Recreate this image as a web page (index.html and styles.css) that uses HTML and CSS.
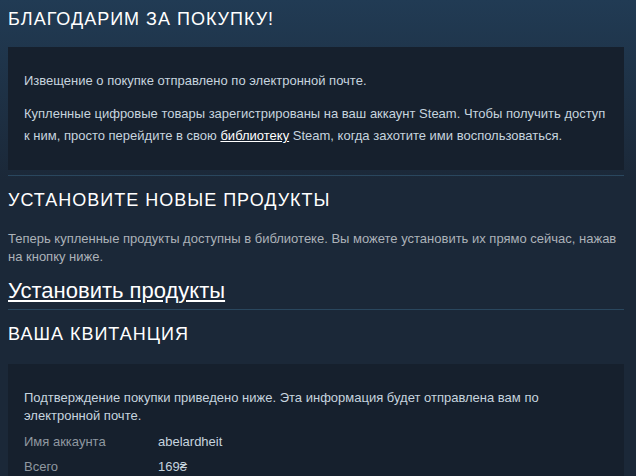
FILE: index.html
```html
<!DOCTYPE html>
<html lang="ru">
<head>
    <meta charset="UTF-8">
    <title>Спасибо за покупку</title>
    <link rel="stylesheet" href="styles.css">
</head>
<body>
    <div class="page">
        <!-- Thanks -->
        <h2 class="title">Благодарим за покупку!</h2>
        <div class="panel">
            <p>Извещение о покупке отправлено по электронной почте.</p>
            <p>Купленные цифровые товары зарегистрированы на ваш аккаунт Steam. Чтобы получить доступ к ним, просто перейдите в свою <a href="#">библиотеку</a> Steam, когда захотите ими воспользоваться.</p>
        </div>
        <div class="divider"></div>

        <!-- Install -->
        <h2 class="title">Установите новые продукты</h2>
        <p class="install-text">Теперь купленные продукты доступны в библиотеке. Вы можете установить их прямо сейчас, нажав на кнопку ниже.</p>
        <a class="install-link" href="#">Установить продукты</a>
        <div class="divider"></div>

        <!-- Receipt -->
        <h2 class="title">Ваша квитанция</h2>
        <div class="panel receipt">
            <p>Подтверждение покупки приведено ниже. Эта информация будет отправлена вам по электронной почте.</p>
            <div class="row">
                <span class="label">Имя аккаунта</span>
                <span class="value">abelardheit</span>
            </div>
            <div class="row">
                <span class="label">Всего</span>
                <span class="value">169₴</span>
            </div>
        </div>
    </div>
</body>
</html>
```

FILE: styles.css
```css
body {
    margin: 0;
    font-family: "Liberation Sans", Arial, sans-serif;
    font-size: 13px;
    color: #acb2b8;
    background: linear-gradient(to bottom, #213b54 0px, #1b2838 180px) #1b2838;
    min-height: 100vh;
}

.page {
    width: 616px;
    padding: 0 8px;
}

.title {
    margin: 0;
    padding: 9px 0 0;
    height: 38px;
    font-size: 18px;
    font-weight: normal;
    text-transform: uppercase;
    letter-spacing: 1px;
    color: #ffffff;
}

.panel {
    background: #16202d;
    padding: 23px 16px 23px;
    color: #c6d4df;
}

.panel p {
    margin: 0 0 11px;
    line-height: 22px;
}

.panel p:last-child {
    margin-bottom: 0;
}

.panel a {
    color: #ffffff;
}

.divider {
    height: 1px;
    background: #2a475e;
    margin: 5px 0 5px;
}

.install-text {
    margin: 2px 0 12px;
    line-height: 18px;
}

.install-link {
    display: block;
    width: max-content;
    color: #ffffff;
    font-size: 22px;
    line-height: 26px;
}

.receipt {
    margin-top: 2px;
    padding-top: 25px;
}

.receipt p {
    line-height: 18px;
    margin-bottom: 4px;
}

.row {
    display: flex;
    line-height: 25px;
}

.label {
    width: 134px;
    color: #8f98a0;
}

.value {
    color: #c6d4df;
}
```
